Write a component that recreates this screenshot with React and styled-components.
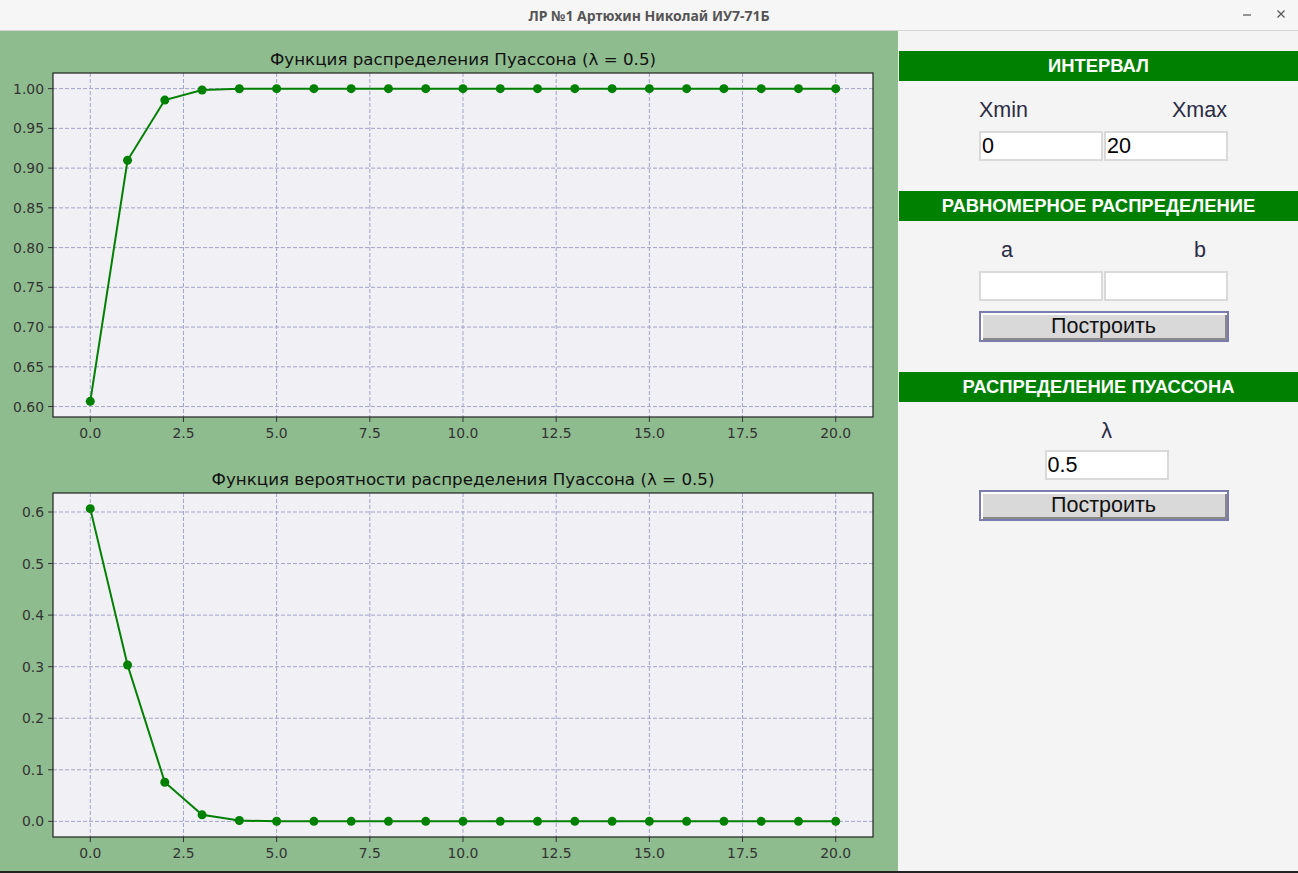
import styled, { createGlobalStyle } from "styled-components";

const GlobalStyle = createGlobalStyle`
  html, body {
    margin: 0;
    padding: 0;
    background: #1e1e1e;
  }
  * {
    box-sizing: border-box;
  }
`;

const LAMBDA = 0.5;

const poisson = () => {
  const pmf = [];
  const cdf = [];
  let p = Math.exp(-LAMBDA);
  let sum = 0;
  for (let k = 0; k <= 20; k++) {
    if (k > 0) p = (p * LAMBDA) / k;
    sum += p;
    pmf.push(p);
    cdf.push(sum);
  }
  return { pmf, cdf };
};

const { pmf, cdf } = poisson();

// axes box inside each figure
const AX = { left: 53, right: 873, top: 42, bottom: 386 };

const Chart = ({ title, data, ticks, fmt }) => {
  const minY = Math.min(...data);
  const maxY = Math.max(...data);
  const pad = (maxY - minY) * 0.05;
  const y0 = minY - pad;
  const y1 = maxY + pad;
  const sx = (v) => AX.left + ((v + 1) / 22) * (AX.right - AX.left);
  const sy = (v) => AX.bottom - ((v - y0) / (y1 - y0)) * (AX.bottom - AX.top);
  const xticks = [0, 2.5, 5, 7.5, 10, 12.5, 15, 17.5, 20];
  const points = data.map((v, i) => `${sx(i)},${sy(v)}`).join(" ");

  return (
    <Figure width="898" height="420" viewBox="0 0 898 420">
      <text
        x="463"
        y="34"
        textAnchor="middle"
        fontFamily="DejaVu Sans, sans-serif"
        fontSize="16.7"
        fill="#111"
      >
        {title}
      </text>
      <rect
        x={AX.left}
        y={AX.top}
        width={AX.right - AX.left}
        height={AX.bottom - AX.top}
        fill="#f0f0f5"
      />
      {xticks.map((t) => (
        <g key={"x" + t}>
          <line
            x1={sx(t)}
            x2={sx(t)}
            y1={AX.top}
            y2={AX.bottom}
            stroke="#a3a3cc"
            strokeWidth="1"
            strokeDasharray="4 2"
          />
          <line x1={sx(t)} x2={sx(t)} y1={AX.bottom} y2={AX.bottom + 5} stroke="#333" />
          <text
            x={sx(t)}
            y={AX.bottom + 21}
            textAnchor="middle"
            fontFamily="DejaVu Sans, sans-serif"
            fontSize="13.9"
            fill="#333"
          >
            {t.toFixed(1)}
          </text>
        </g>
      ))}
      {ticks.map((t) => (
        <g key={"y" + t}>
          <line
            x1={AX.left}
            x2={AX.right}
            y1={sy(t)}
            y2={sy(t)}
            stroke="#a3a3cc"
            strokeWidth="1"
            strokeDasharray="4 2"
          />
          <line x1={AX.left - 5} x2={AX.left} y1={sy(t)} y2={sy(t)} stroke="#333" />
          <text
            x={AX.left - 9}
            y={sy(t) + 5}
            textAnchor="end"
            fontFamily="DejaVu Sans, sans-serif"
            fontSize="13.9"
            fill="#333"
          >
            {fmt(t)}
          </text>
        </g>
      ))}
      <polyline points={points} fill="none" stroke="#008000" strokeWidth="2" />
      {data.map((v, i) => (
        <circle key={i} cx={sx(i)} cy={sy(v)} r="4.5" fill="#008000" />
      ))}
      <rect
        x={AX.left}
        y={AX.top}
        width={AX.right - AX.left}
        height={AX.bottom - AX.top}
        fill="none"
        stroke="#222"
        strokeWidth="1.2"
      />
    </Figure>
  );
};

const App = () => {
  return (
    <>
      <GlobalStyle />
      <Window>
        <TitleBar>
          <span>ЛР №1 Артюхин Николай ИУ7-71Б</span>
          <Controls>
            <svg width="10" height="10" viewBox="0 0 10 10">
              <line x1="1" y1="6" x2="9" y2="6" stroke="#555" strokeWidth="1.2" />
            </svg>
            <svg width="10" height="10" viewBox="0 0 10 10">
              <path d="M1.5 1.5 L8.5 8.5 M8.5 1.5 L1.5 8.5" stroke="#555" strokeWidth="1.2" />
            </svg>
          </Controls>
        </TitleBar>
        <Body>
          <PlotArea>
            <Chart
              title="Функция распределения Пуассона (λ = 0.5)"
              data={cdf}
              ticks={[0.6, 0.65, 0.7, 0.75, 0.8, 0.85, 0.9, 0.95, 1.0]}
              fmt={(t) => t.toFixed(2)}
            />
            <Chart
              title="Функция вероятности распределения Пуассона (λ = 0.5)"
              data={pmf}
              ticks={[0, 0.1, 0.2, 0.3, 0.4, 0.5, 0.6]}
              fmt={(t) => t.toFixed(1)}
            />
          </PlotArea>
          <Sidebar>
            <Header>ИНТЕРВАЛ</Header>
            <Section>
              <FieldGrid>
                <Label align="left">Xmin</Label>
                <Label align="right">Xmax</Label>
                <Input defaultValue="0" />
                <Input defaultValue="20" />
              </FieldGrid>
            </Section>
            <Header>РАВНОМЕРНОЕ РАСПРЕДЕЛЕНИЕ</Header>
            <Section>
              <FieldGrid>
                <Label align="left" indent="22px">a</Label>
                <Label align="right" indent="22px">b</Label>
                <Input />
                <Input />
              </FieldGrid>
              <Button>Построить</Button>
            </Section>
            <Header>РАСПРЕДЕЛЕНИЕ ПУАССОНА</Header>
            <Section>
              <SingleField>
                <Label align="center">λ</Label>
                <Input defaultValue="0.5" />
              </SingleField>
              <Button>Построить</Button>
            </Section>
          </Sidebar>
        </Body>
        <BottomEdge />
      </Window>
    </>
  );
};

const Window = styled.div`
  width: 1298px;
  height: 873px;
  display: flex;
  flex-direction: column;
  overflow: hidden;
`;

const TitleBar = styled.div`
  height: 31px;
  background: #f6f6f6;
  border-bottom: 1px solid #d6d6d6;
  display: flex;
  align-items: center;
  justify-content: center;
  position: relative;
  font-family: "Noto Sans", sans-serif;
  font-weight: 700;
  font-size: 14px;
  color: #555;
`;

const Controls = styled.div`
  position: absolute;
  right: 12px;
  top: 9px;
  display: flex;
  gap: 24px;
`;

const Body = styled.div`
  flex: 1;
  display: flex;
`;

const PlotArea = styled.div`
  width: 898px;
  background: #8fbc8f;
  display: flex;
  flex-direction: column;
`;

const Figure = styled.svg`
  display: block;
`;

const Sidebar = styled.div`
  flex: 1;
  background: #f4f4f4;
  padding-top: 20px;
  padding-left: 1px;
  display: flex;
  flex-direction: column;
`;

const Header = styled.div`
  height: 30px;
  background: #008000;
  color: #fff;
  font-family: "Liberation Sans", Arial, sans-serif;
  font-weight: 700;
  font-size: 18.4px;
  display: flex;
  align-items: center;
  justify-content: center;
`;

const Section = styled.div`
  display: flex;
  flex-direction: column;
  align-items: center;
  padding: 16px 0 30px;
  gap: 10px;
`;

const FieldGrid = styled.div`
  display: grid;
  grid-template-columns: 124px 124px;
  column-gap: 1px;
  row-gap: 8px;
  margin-left: 10px;
`;

const SingleField = styled.div`
  display: flex;
  flex-direction: column;
  align-items: center;
  gap: 6px;
  margin-left: 16px;
`;

const Label = styled.div`
  font-family: "Liberation Sans", Arial, sans-serif;
  font-size: 21.5px;
  color: #2b2b45;
  line-height: 26px;
  text-align: ${(p) => p.align};
  padding-left: ${(p) => (p.align === "right" ? "0" : p.indent || "0")};
  padding-right: ${(p) => (p.align === "right" ? p.indent || "1px" : "0")};
`;

const Input = styled.input`
  width: 124px;
  height: 30px;
  border: 2px solid #d9d9d9;
  background: #fff;
  font-family: "Liberation Sans", Arial, sans-serif;
  font-size: 21.5px;
  color: #000;
  padding: 0 1px;
  outline: none;
`;

const Button = styled.button`
  width: 250px;
  height: 31px;
  margin-left: 10px;
  background: #d9d9d9;
  border: 2px solid #7b7bad;
  box-shadow: inset 2px 2px 0 #fff, inset -2px -2px 0 #888;
  font-family: "Liberation Sans", Arial, sans-serif;
  font-size: 21.5px;
  color: #111;
  padding: 0;
`;

const BottomEdge = styled.div`
  height: 2px;
  background: #222;
`;

export default App;
